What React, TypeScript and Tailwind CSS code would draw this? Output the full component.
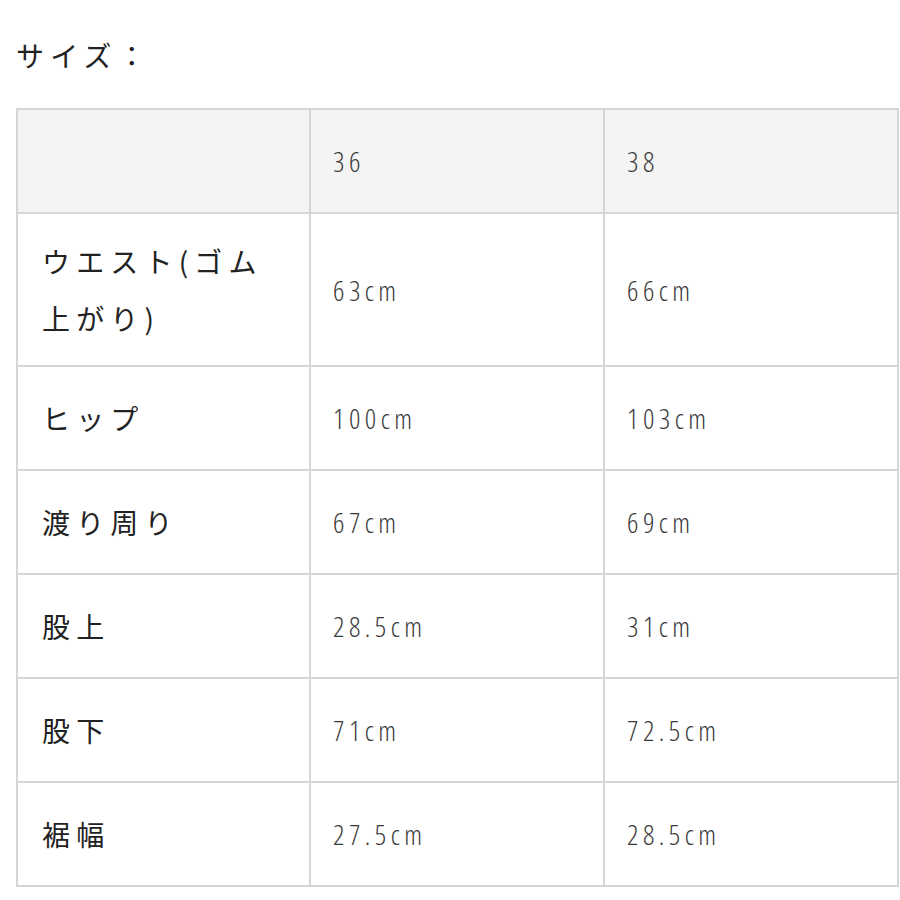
import React from "react";

const rows: [string[], string, string][] = [
  [["ウエスト(ゴム", "上がり)"], "63cm", "66cm"],
  [["ヒップ"], "100cm", "103cm"],
  [["渡り周り"], "67cm", "69cm"],
  [["股上"], "28.5cm", "31cm"],
  [["股下"], "71cm", "72.5cm"],
  [["裾幅"], "27.5cm", "28.5cm"],
];

const numCls =
  "border-2 border-[#d6d6d6] pl-[22px] text-left font-light text-[28px] text-[#3a3a3a] tracking-[0.16em] font-['Open_Sans',sans-serif] font-stretch-condensed";

export default function App() {
  return (
    <div className="w-[900px] h-[900px] bg-white pt-[36px] pl-[16px]">
      <div className="text-[28px] leading-[38px] text-[#222] tracking-[0.22em] font-['Noto_Sans_CJK_JP',sans-serif]">
        サイズ：
      </div>
      <table className="mt-[34px] w-[881px] border-collapse border-2 border-[#d6d6d6] table-fixed">
        <colgroup>
          <col className="w-[293px]" />
          <col className="w-[294px]" />
          <col className="w-[294px]" />
        </colgroup>
        <thead>
          <tr className="bg-[#f4f4f4] h-[104px]">
            <th className="border-2 border-[#d6d6d6]"></th>
            <th className={numCls}>36</th>
            <th className={numCls}>38</th>
          </tr>
        </thead>
        <tbody>
          {rows.map(([label, a, b], i) => (
            <tr key={i} className={label.length > 1 ? "h-[153px]" : "h-[104px]"}>
              <td className="border-2 border-[#d6d6d6] pl-[24px] text-[28px] leading-[57px] text-[#222] tracking-[0.22em] font-['Noto_Sans_CJK_JP',sans-serif]">
                {label.map((l, j) => (
                  <div key={j}>{l}</div>
                ))}
              </td>
              <td className={numCls}>{a}</td>
              <td className={numCls}>{b}</td>
            </tr>
          ))}
        </tbody>
      </table>
    </div>
  );
}
